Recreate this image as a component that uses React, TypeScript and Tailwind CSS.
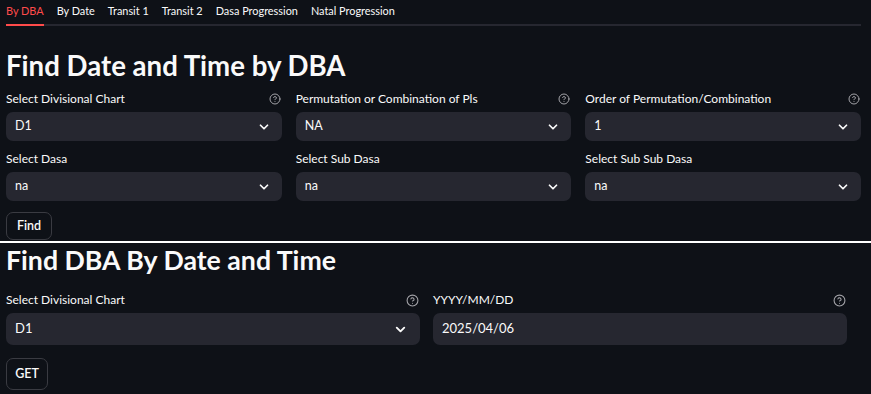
import React from 'react';
import { ChevronDown } from 'lucide-react';

const font = { fontFamily: 'Lato, "Noto Sans", sans-serif' };

const tabs = ['By DBA', 'By Date', 'Transit 1', 'Transit 2', 'Dasa Progression', 'Natal Progression'];

function Help({ size = 12 }: { size?: number }) {
  return (
    <svg width={size} height={size} viewBox="0 0 24 24" fill="none" stroke="#a3a3a8" strokeWidth={2} strokeLinecap="round" strokeLinejoin="round">
      <circle cx="12" cy="12" r="10" />
      <path d="M9.1 9a3 3 0 0 1 5.8 1c0 2-3 3-3 3" />
      <path d="M12 17h.01" />
    </svg>
  );
}

function Field({
  label,
  value,
  help,
  select = true,
  big = false,
}: {
  label: string;
  value: string;
  help?: boolean;
  select?: boolean;
  big?: boolean;
}) {
  return (
    <div className="flex flex-col">
      <div className="flex h-[21px] items-start justify-between">
        <span className="text-[12px] leading-[16px] text-[#fafafa]">{label}</span>
        {help && (
          <span className="mr-[1px] mt-[2px]">
            <Help size={big ? 13 : 12} />
          </span>
        )}
      </div>
      <div
        className={`flex items-center justify-between rounded-[7px] bg-[#262730] text-[#fafafa] ${
          big ? 'h-[32px] pl-[9px] pr-[12px] text-[13px]' : 'h-[29px] pl-[9px] pr-[11px] text-[12.5px]'
        }`}
      >
        <span>{value}</span>
        {select && <ChevronDown size={big ? 15 : 14} strokeWidth={3} color="#fafafa" />}
      </div>
    </div>
  );
}

export default function App() {
  return (
    <div className="h-[394px] w-[871px] overflow-hidden bg-[#0e1117] text-[#fafafa]" style={font}>
      <div className="flex h-[241px] flex-col pl-[6px] pr-[10px]">
        <div className="flex h-[26px] gap-[13px] border-b-2 border-[#262730] pt-[3px]">
          {tabs.map((t, i) => (
            <div
              key={t}
              className={`-mb-[2px] border-b-2 text-[10.9px] leading-[16px] ${
                i === 0 ? 'border-[#ff4b4b] text-[#ff4b4b]' : 'border-transparent text-[#fafafa]'
              }`}
            >
              {t}
            </div>
          ))}
        </div>
        <h1 className="mt-[23px] text-[27.6px] font-bold leading-[34px]">Find Date and Time by DBA</h1>
        <div className="mt-[8px] grid grid-cols-3 gap-x-[14px] gap-y-[10px]">
          <Field label="Select Divisional Chart" value="D1" help />
          <Field label="Permutation or Combination of Pls" value="NA" help />
          <Field label="Order of Permutation/Combination" value="1" help />
          <Field label="Select Dasa" value="na" />
          <Field label="Select Sub Dasa" value="na" />
          <Field label="Select Sub Sub Dasa" value="na" />
        </div>
        <div className="mt-[11px]">
          <button className="h-[28px] w-[46px] rounded-[7px] border border-[#3a3b42] text-[12.5px] font-semibold text-[#fafafa]">
            Find
          </button>
        </div>
      </div>
      <div className="h-[2px] bg-white" />
      <div className="flex flex-col pl-[6px] pr-[24px]">
        <h1 className="mt-0 text-[26.7px] font-bold leading-[34px]">Find DBA By Date and Time</h1>
        <div className="mt-[15px] grid grid-cols-2 gap-x-[13px]">
          <Field label="Select Divisional Chart" value="D1" help big />
          <Field label="YYYY/MM/DD" value="2025/04/06" help big select={false} />
        </div>
        <div className="mt-[13px]">
          <button className="h-[32px] w-[42px] rounded-[7px] border border-[#3a3b42] text-[12.5px] font-semibold text-[#fafafa]">
            GET
          </button>
        </div>
      </div>
    </div>
  );
}
